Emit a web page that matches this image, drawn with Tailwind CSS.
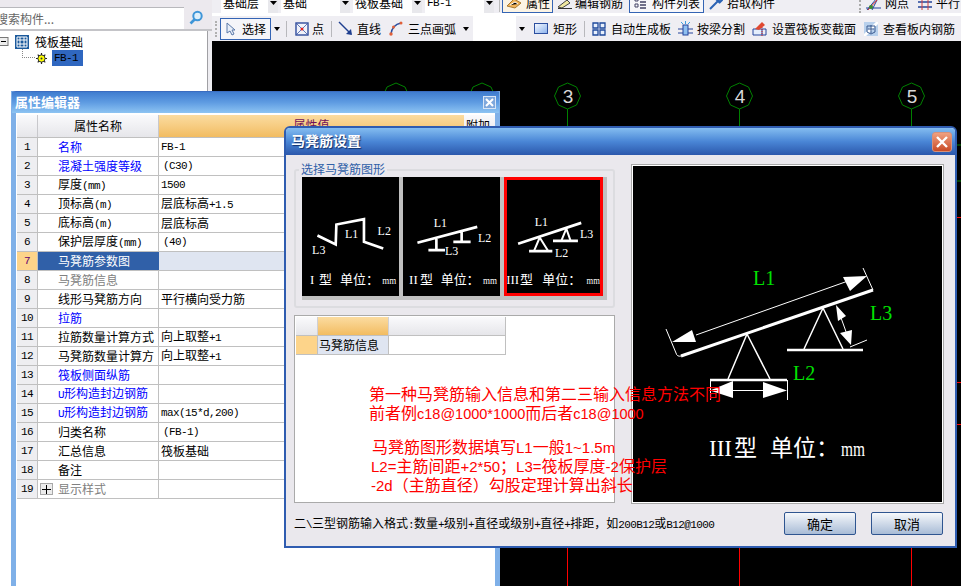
<!DOCTYPE html>
<html lang="zh"><head><meta charset="utf-8"><title>马凳筋设置</title>
<script src="https://cdn.jsdelivr.net/npm/@tailwindcss/browser@4"></script></head>
<body>
<div class="relative w-[961px] h-[586px] overflow-hidden flex bg-black text-[12px] leading-[14px] text-black font-['Noto_Sans_CJK_SC','Liberation_Sans',sans-serif]">

<!-- left tree panel -->
<aside class="w-[212px] shrink-0 flex flex-col bg-white">
  <div class="h-[7px] bg-[#ece9ee]"></div>
  <div class="h-[24px] flex border-b-2 border-[#c4c4c8] pr-[4px] bg-[#ece9ee]">
    <div class="w-[184px] bg-white border-t border-[#b8b8bc] pt-[4px] pl-0 text-[#666] whitespace-nowrap overflow-hidden"><span class="block -ml-[4px]">搜索构件...</span></div>
    <div class="w-[24px] flex items-center justify-center">
      <svg width="16" height="16" viewBox="0 0 16 16"><circle cx="9.5" cy="6" r="4.2" fill="#dff0fb" stroke="#3f96d8" stroke-width="2"/><path d="M6.5 9.5 L2.5 13.5" stroke="#3f96d8" stroke-width="2.6"/></svg>
    </div>
  </div>
  <div class="flex-1 flex border-r-4 border-[#eeedf1]">
    <div class="flex-1 border-r border-[#a0a0a4]">
      <div class="h-[17px] flex items-center mt-[2px]">
        <svg class="shrink-0" width="9" height="9" viewBox="0 0 9 9"><rect x="-1" y="0.5" width="9" height="8" fill="#eee" stroke="#777"/><path d="M1 4.5h5" stroke="#000"/></svg>
        <svg class="ml-[6px] shrink-0" width="14" height="14" viewBox="0 0 14 14"><rect width="14" height="14" fill="#1c5a9c"/><path d="M2 2h10v10H2z M2 5h10 M2 9h10 M5 2v10 M9 2v10" stroke="#fff" fill="none"/></svg>
        <span class="ml-[6px]">筏板基础</span>
      </div>
      <div class="relative h-[16px] flex items-center pl-[36px]">
        <div class="absolute left-[22px] -top-[1px] h-[9px] w-[13px] border-l border-b border-dotted border-[#888]"></div>
        <svg class="shrink-0" width="11" height="11" viewBox="0 0 11 11"><path d="M5.5 0v11M0 5.5h11M1.7 1.7l7.6 7.6M9.3 1.7l-7.6 7.6" stroke="#222" stroke-width="1.2"/><circle cx="5.5" cy="5.5" r="3.6" fill="#ff0" stroke="#333"/><circle cx="5.5" cy="5.5" r="1" fill="#333"/></svg>
        <span class="ml-[5px] w-[31px] h-[16px] bg-[#2f67c0] flex items-center pl-[2px] font-['Liberation_Mono'] text-[11px] tracking-[-0.6px]">FB-1</span>
      </div>
    </div>
  </div>
</aside>

<!-- right: toolbars + canvas -->
<main class="flex-1 flex flex-col min-w-0">
  <div class="h-[13px] overflow-hidden bg-[#efeef3] flex items-start whitespace-nowrap">
    <div class="flex items-center h-[20px] -mt-[7px] shrink-0">
      <div class="ml-[9px] w-[57px] h-[20px] bg-white flex items-center pl-[2px] justify-between"><span>基础层</span><span class="w-[10px] h-[20px] bg-[#e8e8ec] flex items-center justify-center"><svg width="7" height="4"><path d="M0 0h7L3.5 4z"/></svg></span></div>
      <div class="ml-[3px] w-[69px] h-[20px] bg-white flex items-center pl-[2px] justify-between"><span>基础</span><span class="w-[10px] h-[20px] bg-[#e8e8ec] flex items-center justify-center"><svg width="7" height="4"><path d="M0 0h7L3.5 4z"/></svg></span></div>
      <div class="ml-[3px] w-[69px] h-[20px] bg-white flex items-center pl-[2px] justify-between"><span>筏板基础</span><span class="w-[10px] h-[20px] bg-[#e8e8ec] flex items-center justify-center"><svg width="7" height="4"><path d="M0 0h7L3.5 4z"/></svg></span></div>
      <div class="ml-[3px] w-[69px] h-[20px] bg-white flex items-center pl-[2px] justify-between"><span class="font-['Liberation_Mono'] text-[11px] tracking-[-0.6px]">FB-1</span><span class="w-[10px] h-[20px] bg-[#e8e8ec] flex items-center justify-center"><svg width="7" height="4"><path d="M0 0h7L3.5 4z"/></svg></span></div>
      <div class="ml-[5px] w-px h-[18px] bg-[#bbb]"></div>
      <div class="ml-[2px] w-[51px] h-[20px] border border-[#3464b4] bg-[#fbf3e4] flex items-center pl-[3px]">
        <svg class="shrink-0" width="16" height="12" viewBox="0 0 16 12"><path d="M1 9 L8 2 L15 6 L9 11z" fill="#f2b45a" stroke="#a87830"/><path d="M4 8l5-3 3 2" stroke="#fff"/></svg>
        <span class="ml-[4px]">属性</span>
      </div>
      <svg class="ml-[4px] shrink-0" width="16" height="12" viewBox="0 0 16 12"><path d="M1 10 L10 3 L13 6 L5 11z" fill="#f0e8a0" stroke="#444"/><path d="M1 11.5h14" stroke="#333"/></svg>
      <span class="ml-[2px] w-[54px] shrink-0">编辑钢筋</span>
      <div class="w-[75px] h-[20px] border border-[#3464b4] bg-[#f7f7fa] flex items-center pl-[4px]">
        <svg class="shrink-0" width="13" height="12" viewBox="0 0 13 12"><path d="M1 1h3v3H1zM1 7h3v3H1z" fill="none" stroke="#446"/><path d="M6 2h6M6 5h6M6 8h6M6 11h6" stroke="#446" stroke-width="1.4"/></svg>
        <span class="ml-[5px]">构件列表</span>
      </div>
      <svg class="ml-[5px] shrink-0" width="14" height="14" viewBox="0 0 14 14"><path d="M1 13L9 5M7 3l4 4M10 1l3 3-2 2-3-3z" stroke="#2a62b4" stroke-width="2" fill="#7fb2e8"/></svg>
      <span class="ml-[4px] w-[48px] shrink-0">拾取构件</span>
      <div class="ml-[84px] w-[3px] h-[20px] border-l-2 border-dotted border-[#aaa]"></div>
      <svg class="ml-[4px] shrink-0" width="15" height="14" viewBox="0 0 15 14"><path d="M0 12h15M6 14l7-14M1 14L11 2" stroke="#24459c" fill="none"/><path d="M2 14l9-10" stroke="#e03030"/><circle cx="5" cy="11" r="2" fill="#3a8a30"/></svg>
      <span class="ml-[4px] w-[24px] shrink-0">网点</span>
      <svg class="ml-[9px] shrink-0" width="14" height="14" viewBox="0 0 14 14"><path d="M0 6h14M0 11h14" stroke="#24459c" stroke-width="1.4"/><path d="M4 0v14M10 0v14" stroke="#d04040"/></svg>
      <span class="ml-[4px] shrink-0">平行</span>
    </div>
  </div>
  <div class="h-[3px] bg-white"></div>
  <div class="h-[25px] bg-[#efeef3] flex items-center whitespace-nowrap overflow-hidden">
    <div class="ml-[3px] w-[3px] h-[16px] shrink-0 border-l-2 border-dotted border-[#b0b0b0]"></div>
    <div class="ml-[2px] w-[51px] h-[22px] shrink-0 border border-[#3464b4] bg-[#f5f5f9] flex items-center pl-[5px]">
      <svg class="shrink-0" width="10" height="14" viewBox="0 0 10 14"><path d="M1 1v10l3-2 2 4 2-1-2-4h3z" fill="#e8eef8" stroke="#5a78a8"/></svg>
      <span class="ml-[6px]">选择</span>
    </div>
    <svg class="ml-[3px] shrink-0" width="6" height="4"><path d="M0 0h6L3 4z"/></svg>
    <div class="ml-[6px] w-px h-[16px] shrink-0 bg-[#b8b8bc]"></div>
    <svg class="ml-[8px] shrink-0" width="14" height="14" viewBox="0 0 14 14"><rect x="1" y="1" width="12" height="12" fill="#f0f2fa" stroke="#304c9c" stroke-width="1.4"/><path d="M2 2l10 10M12 2L2 12" stroke="#6078b8"/><circle cx="7" cy="7" r="1.5" fill="#e02020"/></svg>
    <span class="ml-[3px] w-[12px] shrink-0">点</span>
    <div class="ml-[7px] w-px h-[16px] shrink-0 bg-[#b8b8bc]"></div>
    <svg class="ml-[6px] shrink-0" width="15" height="15" viewBox="0 0 15 15"><path d="M1 1l12 12" stroke="#1f3f8f" stroke-width="1.4"/><path d="M14 14l-6-1 5-5z" fill="#1f3f8f"/></svg>
    <span class="ml-[4px] w-[24px] shrink-0">直线</span>
    <svg class="ml-[8px] shrink-0" width="14" height="15" viewBox="0 0 14 15"><path d="M2 13Q3 4 12 2" stroke="#2c4fa0" stroke-width="1.4" fill="none"/><circle cx="2" cy="13" r="1.7" fill="#e0603a"/><circle cx="4.5" cy="6" r="1.5" fill="#e0603a"/><circle cx="12" cy="2" r="1.5" fill="#e0603a"/></svg>
    <span class="ml-[5px] w-[48px] shrink-0">三点画弧</span>
    <svg class="ml-[7px] shrink-0" width="6" height="4"><path d="M0 0h6L3 4z"/></svg>
    <div class="ml-[4px] w-[43px] h-[25px] shrink-0 bg-white"></div>
    <svg class="ml-[3px] shrink-0" width="6" height="4"><path d="M0 0h6L3 4z"/></svg>
    <div class="ml-[9px] w-[14px] h-[11px] shrink-0 border border-[#2c4fa0] bg-linear-to-br from-[#f4f8ff] to-[#8fb4ec]"></div>
    <span class="ml-[5px] w-[24px] shrink-0">矩形</span>
    <div class="ml-[7px] w-px h-[16px] shrink-0 bg-[#b8b8bc]"></div>
    <svg class="ml-[7px] shrink-0" width="14" height="14" viewBox="0 0 14 14"><path d="M1 1h5v5H1zM8 1h5v5H8zM1 8h5v5H1zM8 8h5v5H8z" fill="#e8f0fc" stroke="#1f4a9c" stroke-width="1.3"/></svg>
    <span class="ml-[5px] w-[60px] shrink-0">自动生成板</span>
    <svg class="ml-[7px] shrink-0" width="15" height="15" viewBox="0 0 15 15"><path d="M0 8h15M0 12h15" stroke="#24459c"/><rect x="5" y="4" width="5" height="10" fill="#8fc0f0" stroke="#24459c"/><path d="M7.500 0v3M3 1l2 2M12 1l-2 2" stroke="#3aa0e0"/></svg>
    <span class="ml-[4px] w-[48px] shrink-0">按梁分割</span>
    <svg class="ml-[7px] shrink-0" width="15" height="15" viewBox="0 0 15 15"><path d="M1 8h9v6H1z" fill="#e4eefc" stroke="#24459c"/><path d="M10 8h4v6h-4" fill="none" stroke="#24459c"/><path d="M3 8l7-7 3 3-6 5z" fill="#e04830"/><path d="M10 6v9" stroke="#e02020" stroke-dasharray="1 1"/></svg>
    <span class="ml-[5px] w-[84px] shrink-0">设置筏板变截面</span>
    <svg class="ml-[8px] shrink-0" width="14" height="14" viewBox="0 0 14 14"><rect width="14" height="14" fill="#b8d0ec"/><path d="M0 14L14 0" stroke="#fff" stroke-width="3"/><path d="M3 4h8v6l-4 2-4-2zM7 3v8M4 7h6" stroke="#3a5a90" fill="none"/></svg>
    <span class="ml-[5px] shrink-0">查看板内钢筋</span>
  </div>

  <!-- drawing canvas -->
  <div class="relative flex-1 bg-black">
    <svg class="absolute left-0 top-0" width="749" height="545" viewBox="212 41 749 545">
      <g fill="none" stroke="#008000">
        <path d="M396 83l9 4 4 9-4 9-9 4-9-4-4-9 4-9z"/>
        <path d="M482 83l9 4 4 9-4 9-9 4-9-4-4-9 4-9z"/>
        <path d="M567.500 83l9 4 4 9-4 9-9 4-9-4-4-9 4-9z"/>
        <path d="M739.500 83l9 4 4 9-4 9-9 4-9-4-4-9 4-9z"/>
        <path d="M911.500 83l9 4 4 9-4 9-9 4-9-4-4-9 4-9z"/>
        <path d="M567.500 109v20M739.500 109v20M911.500 109v20"/>
        <path d="M955 145h6M955 181h6"/>
      </g>
      <path d="M955 217.500h6M955 382.500h6M955 424.500h6M567.500 545v41M739.500 545v41M911.500 545v41" stroke="#f00" fill="none"/>
      <g fill="#d8d8d8" font-family="Liberation Sans" font-size="19" text-anchor="middle">
        <text x="568" y="103">3</text><text x="740" y="103">4</text><text x="912" y="103">5</text>
      </g>
    </svg>
  </div>
</main>

<!-- property editor window -->
<section class="absolute left-[11px] top-[91px] w-[489px] h-[510px] flex flex-col bg-white border-x-[5px] border-[#7fb0e8] border-t border-t-[#3a6cc0]">
  <div class="h-[21px] shrink-0 -mx-[4px] bg-linear-to-b from-[#3f7ccf] via-[#5f9ce2] to-[#8ec4f2] flex items-center justify-between pl-[3px] pr-[3px] pb-px">
    <span class="text-white font-bold text-[13px]">属性编辑器</span>
    <div class="w-[13px] h-[13px] bg-[#7fa8dc] border border-white/70 flex items-center justify-center"><svg width="9" height="9" viewBox="0 0 9 9"><path d="M1 1l7 7M8 1L1 8" stroke="#fff" stroke-width="2"/></svg></div>
  </div>
  <div class="ml-px mt-[2px] text-[12px]">
    <div class="h-[23px] flex border-b border-[#c0c0c0]">
      <div class="w-[21px] bg-linear-to-b from-[#fafafc] to-[#e6e6ea] border-r border-[#c8c8cc]"></div>
      <div class="w-[121px] bg-linear-to-b from-[#fafafc] to-[#e6e6ea] border-r border-[#c8c8cc] flex items-center justify-center">属性名称</div>
      <div class="w-[305px] bg-linear-to-b from-[#fbdca0] to-[#f2bc60] flex justify-center text-[#70105a] pt-[3px]">属性值</div>
      <div class="flex-1 bg-linear-to-b from-[#fafafc] to-[#e6e6ea] pl-[2px] pt-[3px]">附加</div>
    </div>
    <div class="h-[19px] flex border-b border-[#c0c0c0]"><div class="w-[21px] bg-[#eeeef1] border-r border-[#c0c0c0] flex items-center justify-center font-['Liberation_Mono'] text-[11px] tracking-[-0.6px]">1</div><div class="w-[121px] border-r border-[#c0c0c0] pl-[20px] flex items-center text-[#0000ff]">名称</div><div class="flex-1 pl-[2px] flex items-center font-['Liberation_Mono'] text-[11px] tracking-[-0.6px]">FB-1</div></div>
    <div class="h-[19px] flex border-b border-[#c0c0c0]"><div class="w-[21px] bg-[#eeeef1] border-r border-[#c0c0c0] flex items-center justify-center font-['Liberation_Mono'] text-[11px] tracking-[-0.6px]">2</div><div class="w-[121px] border-r border-[#c0c0c0] pl-[20px] flex items-center text-[#0000ff]">混凝土强度等级</div><div class="flex-1 pl-[4px] flex items-center font-['Liberation_Mono'] text-[11px] tracking-[-0.6px]">(C30)</div></div>
    <div class="h-[19px] flex border-b border-[#c0c0c0]"><div class="w-[21px] bg-[#eeeef1] border-r border-[#c0c0c0] flex items-center justify-center font-['Liberation_Mono'] text-[11px] tracking-[-0.6px]">3</div><div class="w-[121px] border-r border-[#c0c0c0] pl-[20px] flex items-center"><span>厚度<span class="font-['Liberation_Mono'] text-[11px] tracking-[-0.6px]">(mm)</span></span></div><div class="flex-1 pl-[2px] flex items-center font-['Liberation_Mono'] text-[11px] tracking-[-0.6px]">1500</div></div>
    <div class="h-[19px] flex border-b border-[#c0c0c0]"><div class="w-[21px] bg-[#eeeef1] border-r border-[#c0c0c0] flex items-center justify-center font-['Liberation_Mono'] text-[11px] tracking-[-0.6px]">4</div><div class="w-[121px] border-r border-[#c0c0c0] pl-[20px] flex items-center"><span>顶标高<span class="font-['Liberation_Mono'] text-[11px] tracking-[-0.6px]">(m)</span></span></div><div class="flex-1 pl-[2px] flex items-center"><span>层底标高<span class="font-['Liberation_Mono'] text-[11px] tracking-[-0.6px]">+1.5</span></span></div></div>
    <div class="h-[19px] flex border-b border-[#c0c0c0]"><div class="w-[21px] bg-[#eeeef1] border-r border-[#c0c0c0] flex items-center justify-center font-['Liberation_Mono'] text-[11px] tracking-[-0.6px]">5</div><div class="w-[121px] border-r border-[#c0c0c0] pl-[20px] flex items-center"><span>底标高<span class="font-['Liberation_Mono'] text-[11px] tracking-[-0.6px]">(m)</span></span></div><div class="flex-1 pl-[2px] flex items-center">层底标高</div></div>
    <div class="h-[19px] flex border-b border-[#c0c0c0]"><div class="w-[21px] bg-[#eeeef1] border-r border-[#c0c0c0] flex items-center justify-center font-['Liberation_Mono'] text-[11px] tracking-[-0.6px]">6</div><div class="w-[121px] border-r border-[#c0c0c0] pl-[20px] flex items-center"><span>保护层厚度<span class="font-['Liberation_Mono'] text-[11px] tracking-[-0.6px]">(mm)</span></span></div><div class="flex-1 pl-[4px] flex items-center font-['Liberation_Mono'] text-[11px] tracking-[-0.6px]">(40)</div></div>
    <div class="h-[19px] flex border-b border-[#c0c0c0]"><div class="w-[21px] bg-[#fdd48a] border-r border-[#c0c0c0] flex items-center justify-center font-['Liberation_Mono'] text-[11px] tracking-[-0.6px] text-[#600070]">7</div><div class="w-[121px] bg-[#3060a8] pl-[20px] flex items-center text-white">马凳筋参数图</div><div class="flex-1 bg-[#dfe5f1]"></div></div>
    <div class="h-[19px] flex border-b border-[#c0c0c0]"><div class="w-[21px] bg-[#eeeef1] border-r border-[#c0c0c0] flex items-center justify-center font-['Liberation_Mono'] text-[11px] tracking-[-0.6px]">8</div><div class="w-[121px] border-r border-[#c0c0c0] pl-[20px] flex items-center text-[#808080]">马凳筋信息</div><div class="flex-1"></div></div>
    <div class="h-[19px] flex border-b border-[#c0c0c0]"><div class="w-[21px] bg-[#eeeef1] border-r border-[#c0c0c0] flex items-center justify-center font-['Liberation_Mono'] text-[11px] tracking-[-0.6px]">9</div><div class="w-[121px] border-r border-[#c0c0c0] pl-[20px] flex items-center">线形马凳筋方向</div><div class="flex-1 pl-[2px] flex items-center">平行横向受力筋</div></div>
    <div class="h-[19px] flex border-b border-[#c0c0c0]"><div class="w-[21px] bg-[#eeeef1] border-r border-[#c0c0c0] flex items-center justify-center font-['Liberation_Mono'] text-[11px] tracking-[-0.6px]">10</div><div class="w-[121px] border-r border-[#c0c0c0] pl-[20px] flex items-center text-[#0000ff]">拉筋</div><div class="flex-1"></div></div>
    <div class="h-[19px] flex border-b border-[#c0c0c0]"><div class="w-[21px] bg-[#eeeef1] border-r border-[#c0c0c0] flex items-center justify-center font-['Liberation_Mono'] text-[11px] tracking-[-0.6px]">11</div><div class="w-[121px] border-r border-[#c0c0c0] pl-[20px] flex items-center whitespace-nowrap">拉筋数量计算方式</div><div class="flex-1 pl-[2px] flex items-center"><span>向上取整<span class="font-['Liberation_Mono'] text-[11px] tracking-[-0.6px]">+1</span></span></div></div>
    <div class="h-[19px] flex border-b border-[#c0c0c0]"><div class="w-[21px] bg-[#eeeef1] border-r border-[#c0c0c0] flex items-center justify-center font-['Liberation_Mono'] text-[11px] tracking-[-0.6px]">12</div><div class="w-[121px] border-r border-[#c0c0c0] pl-[20px] flex items-center whitespace-nowrap overflow-hidden">马凳筋数量计算方</div><div class="flex-1 pl-[2px] flex items-center"><span>向上取整<span class="font-['Liberation_Mono'] text-[11px] tracking-[-0.6px]">+1</span></span></div></div>
    <div class="h-[19px] flex border-b border-[#c0c0c0]"><div class="w-[21px] bg-[#eeeef1] border-r border-[#c0c0c0] flex items-center justify-center font-['Liberation_Mono'] text-[11px] tracking-[-0.6px]">13</div><div class="w-[121px] border-r border-[#c0c0c0] pl-[20px] flex items-center text-[#0000ff]">筏板侧面纵筋</div><div class="flex-1"></div></div>
    <div class="h-[19px] flex border-b border-[#c0c0c0]"><div class="w-[21px] bg-[#eeeef1] border-r border-[#c0c0c0] flex items-center justify-center font-['Liberation_Mono'] text-[11px] tracking-[-0.6px]">14</div><div class="w-[121px] border-r border-[#c0c0c0] pl-[20px] flex items-center text-[#0000ff]"><span><span class="font-['Liberation_Mono'] text-[11px] tracking-[-0.6px]">U</span>形构造封边钢筋</span></div><div class="flex-1"></div></div>
    <div class="h-[19px] flex border-b border-[#c0c0c0]"><div class="w-[21px] bg-[#eeeef1] border-r border-[#c0c0c0] flex items-center justify-center font-['Liberation_Mono'] text-[11px] tracking-[-0.6px]">15</div><div class="w-[121px] border-r border-[#c0c0c0] pl-[20px] flex items-center text-[#0000ff]"><span><span class="font-['Liberation_Mono'] text-[11px] tracking-[-0.6px]">U</span>形构造封边钢筋</span></div><div class="flex-1 pl-[2px] flex items-center font-['Liberation_Mono'] text-[11px] tracking-[-0.6px]">max(15*d,200)</div></div>
    <div class="h-[19px] flex border-b border-[#c0c0c0]"><div class="w-[21px] bg-[#eeeef1] border-r border-[#c0c0c0] flex items-center justify-center font-['Liberation_Mono'] text-[11px] tracking-[-0.6px]">16</div><div class="w-[121px] border-r border-[#c0c0c0] pl-[20px] flex items-center">归类名称</div><div class="flex-1 pl-[4px] flex items-center font-['Liberation_Mono'] text-[11px] tracking-[-0.6px]">(FB-1)</div></div>
    <div class="h-[19px] flex border-b border-[#c0c0c0]"><div class="w-[21px] bg-[#eeeef1] border-r border-[#c0c0c0] flex items-center justify-center font-['Liberation_Mono'] text-[11px] tracking-[-0.6px]">17</div><div class="w-[121px] border-r border-[#c0c0c0] pl-[20px] flex items-center">汇总信息</div><div class="flex-1 pl-[2px] flex items-center">筏板基础</div></div>
    <div class="h-[19px] flex border-b border-[#c0c0c0]"><div class="w-[21px] bg-[#eeeef1] border-r border-[#c0c0c0] flex items-center justify-center font-['Liberation_Mono'] text-[11px] tracking-[-0.6px]">18</div><div class="w-[121px] border-r border-[#c0c0c0] pl-[20px] flex items-center">备注</div><div class="flex-1"></div></div>
    <div class="h-[19px] flex border-b border-[#c0c0c0]"><div class="w-[21px] bg-[#eeeef1] border-r border-[#c0c0c0] flex items-center justify-center font-['Liberation_Mono'] text-[11px] tracking-[-0.6px]">19</div><div class="w-[121px] border-r border-[#c0c0c0] pl-[2px] flex items-center text-[#808080]"><span class="w-[13px] h-[12px] mr-[5px] bg-[#ececec] border border-[#a8a8a8] flex items-center justify-center"><svg width="9" height="9" viewBox="0 0 9 9"><path d="M4.500 0v9M0 4.500h9" stroke="#000"/></svg></span>显示样式</div><div class="flex-1"></div></div>
  </div>
</section>

<!-- dialog -->
<section class="absolute left-[284px] top-[126px] w-[673px] h-[422px] flex flex-col bg-[#eae8ed] border-2 border-[#2f5cb0] rounded-t-[6px]">
  <div class="h-[27px] shrink-0 rounded-t-[4px] bg-linear-to-b from-[#84bdf0] via-[#4a86d6] to-[#2c58ac] flex items-center justify-between pl-[5px] pr-[3px]">
    <span class="text-white font-bold text-[14px] -mt-[3px] [text-shadow:1px_1px_1px_#12306a]">马凳筋设置</span>
    <div class="w-[20px] h-[20px] rounded-[3px] border border-[#d89078] bg-linear-to-b from-[#f0a080] to-[#c84a24] flex items-center justify-center"><svg width="12" height="12" viewBox="0 0 12 12"><path d="M1 1l10 10M11 1L1 11" stroke="#fff" stroke-width="2.400"/></svg></div>
  </div>
  <div class="flex-1 flex flex-col px-[8px]">
    <div class="flex items-start gap-[16px]">
      <div class="w-[321px] pt-[14px] shrink-0">
        <div class="relative h-[139px] border-2 border-[#dcdce0] rounded-[3px] pl-[6px] pt-[6px]">
          <span class="absolute left-[3px] -top-[9px] px-[2px] bg-[#eae8ed] text-[#3060a8]">选择马凳筋图形</span>
          <div class="w-[305px] bg-[#c0c0c0] flex gap-[4px] pr-[4px] pb-[4px]">
            <svg class="block bg-black shrink-0" width="97" height="119" viewBox="54 155 291 358">
              <path d="M100 331L155 358L157 298L240 282L240 350L298 370" fill="none" stroke="#fff" stroke-width="8"/>
              <g fill="#fff" font-family="Liberation Serif" font-size="36"><text x="183" y="339">L1</text><text x="281" y="330">L2</text><text x="84" y="387">L3</text></g>
              <text y="477" fill="#fff" font-family="Liberation Serif,Noto Sans CJK SC" font-size="39"><tspan x="78">I</tspan><tspan x="105">型</tspan><tspan x="168">单位：</tspan></text>
              <text x="295" y="477" fill="#fff" font-family="Liberation Serif" font-size="32" textLength="42" lengthAdjust="spacingAndGlyphs">mm</text>
            </svg>
            <svg class="block bg-black shrink-0" width="97" height="119" viewBox="357 155 291 358">
              <path d="M400 353L580 305M457 340V375M433 375H483M533 320V350M508 350H560" fill="none" stroke="#fff" stroke-width="8"/>
              <g fill="#fff" font-family="Liberation Serif" font-size="36"><text x="449" y="305">L1</text><text x="582" y="350">L2</text><text x="483" y="390">L3</text></g>
              <text y="477" fill="#fff" font-family="Liberation Serif,Noto Sans CJK SC" font-size="39"><tspan x="375">II</tspan><tspan x="408">型</tspan><tspan x="470">单位：</tspan></text>
              <text x="597" y="477" fill="#fff" font-family="Liberation Serif" font-size="32" textLength="42" lengthAdjust="spacingAndGlyphs">mm</text>
            </svg>
            <svg class="block bg-black shrink-0 border-[3px] border-[#ff0000]" width="99" height="119" viewBox="669 164 279 340">
              <path d="M702 356L892 293M735 378H805M807 347H882" fill="none" stroke="#fff" stroke-width="8"/>
              <path d="M767 337L750 377M767 337L792 377M847 310L832 347M847 310L860 347" fill="none" stroke="#fff" stroke-width="6"/>
              <g fill="#fff" font-family="Liberation Serif" font-size="36"><text x="752" y="303">L1</text><text x="888" y="339">L3</text><text x="813" y="395">L2</text></g>
              <text y="478" fill="#fff" font-family="Liberation Serif,Noto Sans CJK SC" font-size="39"><tspan x="666">III</tspan><tspan x="708">型</tspan><tspan x="775">单位：</tspan></text>
              <text x="908" y="478" fill="#fff" font-family="Liberation Serif" font-size="32" textLength="40" lengthAdjust="spacingAndGlyphs">mm</text>
            </svg>
          </div>
        </div>
        <div class="mt-[7px] h-[188px] border border-[#aaa] bg-white pl-px pt-px">
          <div class="w-[210px] border-r border-[#c0c0c0]">
            <div class="h-[19px] flex border-b border-[#c0c0c0]">
              <div class="w-[21px] bg-linear-to-b from-[#fafafc] to-[#e6e6ea]"></div>
              <div class="w-[72px] bg-linear-to-b from-[#fbdca0] to-[#f2bc60] border-x border-[#d0d0d4]"></div>
              <div class="flex-1 bg-linear-to-b from-[#fafafc] to-[#e6e6ea]"></div>
            </div>
            <div class="h-[19px] flex border-b border-[#c0c0c0]">
              <div class="w-[21px] bg-[#fdd48a]"></div>
              <div class="w-[72px] bg-[#dfe5f1] border-x border-[#c0c0c0] pl-[1px] flex items-center whitespace-nowrap">马凳筋信息</div>
              <div class="flex-1"></div>
            </div>
          </div>
        </div>
      </div>
      <div class="w-[313px] h-[340px] mt-[9px] shrink-0 border border-[#a8a8a8] bg-white p-px">
        <svg class="block bg-black" width="309" height="336" viewBox="633 166 309 336">
          <path d="M873 290L681 356" fill="none" stroke="#fff" stroke-width="3"/>
          <path d="M681 356Q677 357 676 353L666 329M873 290L863 268" fill="none" stroke="#fff"/>
          <path d="M696 335L848 281" fill="none" stroke="#fff"/>
          <path d="M867 276L843 277L850 291zM672 342L692 330L696 342z" fill="#fff"/>
          <path d="M747 334L728 379M747 334L770 379M823 308L804 349M823 308L843 349" fill="none" stroke="#fff" stroke-width="1.500"/>
          <path d="M710 380H787M787 350H863" fill="none" stroke="#fff" stroke-width="2.500"/>
          <path d="M840 315L849 340M850 347L867 340" fill="none" stroke="#fff"/>
          <path d="M836 305L838 321L846 316zM851 345L840 333L852 330z" fill="#fff"/>
          <path d="M730 390.500H765M710.500 380V400M787.500 380V400" fill="none" stroke="#fff"/>
          <path d="M710 390.500L733 381V398zM787 390.500L763 382V398z" fill="#fff"/>
          <g fill="#00e000" font-family="Liberation Serif" font-size="20"><text x="753" y="285">L1</text><text x="870" y="320">L3</text><text x="793" y="380">L2</text></g>
          <text y="456" fill="#fff" font-family="Liberation Serif,Noto Sans CJK SC" font-size="23"><tspan x="709">III</tspan><tspan x="734">型</tspan><tspan x="770">单位：</tspan></text>
          <text x="841" y="456" fill="#fff" font-family="Liberation Serif" font-size="22" textLength="24" lengthAdjust="spacingAndGlyphs">mm</text>
        </svg>
      </div>
    </div>
    <div class="flex-1 flex items-center pb-[3px] pl-0 relative">
      <span class="whitespace-nowrap">二<span class="font-['Liberation_Mono'] text-[11px] tracking-[-0.6px]">\</span>三型钢筋输入格式<span class="font-['Liberation_Mono'] text-[11px] tracking-[-0.6px]">:</span>数量<span class="font-['Liberation_Mono'] text-[11px] tracking-[-0.6px]">+</span>级别<span class="font-['Liberation_Mono'] text-[11px] tracking-[-0.6px]">+</span>直径或级别<span class="font-['Liberation_Mono'] text-[11px] tracking-[-0.6px]">+</span>直径<span class="font-['Liberation_Mono'] text-[11px] tracking-[-0.6px]">+</span>排距，如<span class="font-['Liberation_Mono'] text-[11px] tracking-[-0.6px]">200B12</span>或<span class="font-['Liberation_Mono'] text-[11px] tracking-[-0.6px]">B12@1000</span></span>
      <div class="ml-auto flex gap-[15px] mr-[4px]">
        <button class="w-[72px] h-[23px] rounded-[2px] border border-[#2f5590] bg-linear-to-b from-[#f6f8fb] to-[#a9bcd6] text-[13px]">确定</button>
        <button class="w-[72px] h-[23px] rounded-[2px] border border-[#2f5590] bg-linear-to-b from-[#f6f8fb] to-[#a9bcd6] text-[13px]">取消</button>
      </div>
    </div>
  </div>
  <!-- annotation typed over the dialog -->
  <div class="absolute left-[83px] top-[257px] text-[#ff0000] text-[16px] leading-[19px] whitespace-nowrap font-['Liberation_Sans','Noto_Sans_CJK_SC',sans-serif]">
    <p>第一种马凳筋输入信息和第二三输入信息方法不同</p>
    <p>前者例<span class="text-[14.5px]">c18@1000*1000</span>而后者<span class="text-[14.5px]">c18@1000</span></p>
    <p class="mt-[14px] ml-[3px]">马凳筋图形数据填写<span class="text-[15px]">L1</span>一般<span class="text-[15px]">1~1.5m</span></p>
    <p class="ml-[2px]"><span class="text-[15px]">L2=</span>主筋间距<span class="text-[15px]">+2*50</span>；<span class="text-[15px]">L3=</span>筏板厚度<span class="text-[15px]">-2</span>保护层</p>
    <p class="ml-[2px]"><span class="text-[15px]">-2d</span>（主筋直径）勾股定理计算出斜长</p>
  </div>
</section>
</div>
</body></html>
